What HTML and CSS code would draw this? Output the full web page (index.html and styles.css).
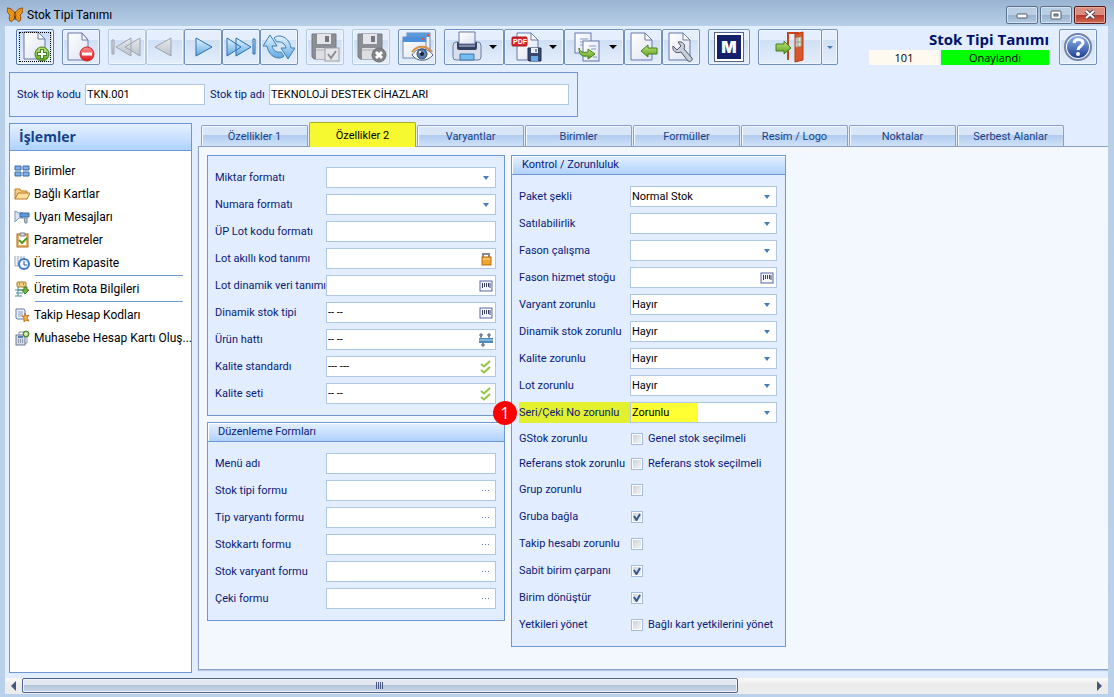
FILE: index.html
```html
<!DOCTYPE html>
<html lang="tr">

<head>
    <meta charset="UTF-8">
    <meta name="viewport" content="width=device-width, initial-scale=1.0">
    <title>Stok Tipi Tanımı</title>
    <link rel="stylesheet" href="styles.css">
</head>

<body>
    <!-- shared icon shapes -->
    <svg class="defs" width="0" height="0" aria-hidden="true">
        <defs>
            <linearGradient id="gBlue" x1="0" y1="0" x2="0" y2="1">
                <stop offset="0" stop-color="#e4f5ff"/>
                <stop offset="1" stop-color="#62a8e2"/>
            </linearGradient>
            <linearGradient id="gGray" x1="0" y1="0" x2="0" y2="1">
                <stop offset="0" stop-color="#e6e9ee"/>
                <stop offset="1" stop-color="#bcc2cb"/>
            </linearGradient>
            <linearGradient id="gGreen" x1="0" y1="0" x2="0" y2="1">
                <stop offset="0" stop-color="#c3e67e"/>
                <stop offset="1" stop-color="#5a9f1e"/>
            </linearGradient>
            <linearGradient id="gRed" x1="0" y1="0" x2="0" y2="1">
                <stop offset="0" stop-color="#ff8f8f"/>
                <stop offset="1" stop-color="#e0151b"/>
            </linearGradient>
            <linearGradient id="gPaper" x1="0" y1="0" x2="1" y2="1">
                <stop offset="0" stop-color="#ffffff"/>
                <stop offset="1" stop-color="#dde3f2"/>
            </linearGradient>
            <linearGradient id="gHelp" x1="0" y1="0" x2="0" y2="1">
                <stop offset="0" stop-color="#8fb4e6"/>
                <stop offset="1" stop-color="#1c3f96"/>
            </linearGradient>
            <symbol id="barcode" viewBox="0 0 14 12">
                <rect x="1" y="1" width="12" height="10" fill="#f4f6fc" stroke="#5868a4"/>
                <path d="M3.500 3v5M5.500 3v4M7.500 3v4M9.500 3v4M11 3v5" stroke="#39405f"/>
            </symbol>
            <symbol id="checks" viewBox="0 0 12 14">
                <path d="M1 4l3 2.500 6-5.500M1 10l3 2.500 6-5.500" fill="none" stroke="#93c544" stroke-width="2"/>
            </symbol>
            <symbol id="floppy" viewBox="0 0 26 27">
                <path d="M1 1h24v25H3l-2-2z" fill="#8b8f95" stroke="#777b81"/>
                <rect x="6" y="1" width="14" height="10" fill="#e3e5e8"/>
                <rect x="14" y="3" width="4" height="6" fill="#74787e"/>
                <rect x="5" y="15" width="16" height="11" fill="#dcdee2"/>
                <path d="M5 17h16" stroke="#abafb5"/>
            </symbol>
        </defs>
    </svg>

    <div class="window">
        <header class="titlebar">
            <svg class="app-icon" width="16" height="16" viewBox="0 0 16 16">
                <path d="M8 6C6 3 4 1 0 1c0 3 1 6 3 7-1 2-1 4 0 6 3 1 4-2 5-5 1 3 2 6 5 5 1-2 1-4 0-6 2-1 3-4 3-7-4 0-6 2-8 5z" fill="#f09a1c" stroke="#8a4b0c"/>
                <path d="M2 3l5 5-3 4M14 3L9 8l3 4" fill="none" stroke="#d9790c"/>
                <path d="M8 5v8" stroke="#4b2a0a"/>
            </svg>
            <span class="window-title">Stok Tipi Tanımı</span>
            <div class="window-buttons">
                <button type="button" aria-label="Küçült">
                    <svg width="14" height="12" viewBox="0 0 14 12"><rect x="2" y="5" width="10" height="4" rx="1" fill="#fff" stroke="#50596a"/></svg>
                </button>
                <button type="button" aria-label="Geri yükle">
                    <svg width="14" height="12" viewBox="0 0 14 12"><rect x="2" y="2" width="10" height="8" rx="1" fill="#fff" stroke="#50596a"/><rect x="5" y="5" width="4" height="2" fill="#9db6d2" stroke="#50596a"/></svg>
                </button>
                <button type="button" class="close" aria-label="Kapat">
                    <svg width="14" height="12" viewBox="0 0 14 12"><path d="M3 2l8 7M11 2L3 9" stroke="#49475a" stroke-width="4"/><path d="M3 2l8 7M11 2L3 9" stroke="#fff" stroke-width="2"/></svg>
                </button>
            </div>
        </header>

        <main class="client">
            <div class="toolbar">
                <div class="tool-group">
                    <button type="button" class="tool focused" aria-label="Yeni">
                        <svg width="32" height="32" viewBox="0 0 32 32">
                            <path d="M5 1h14l7 7v20H5z" fill="url(#gPaper)" stroke="#6878a8"/>
                            <path d="M19 1v7h7z" fill="#fff" stroke="#6878a8"/>
                            <circle cx="23" cy="23" r="7" fill="url(#gGreen)" stroke="#43801a"/>
                            <path d="M23 18v10M18 23h10" stroke="#4a861f" stroke-width="4"/>
                            <path d="M23 19v8M19 23h8" stroke="#fff" stroke-width="2"/>
                        </svg>
                    </button>
                </div>
                <div class="tool-group">
                    <button type="button" class="tool" aria-label="Sil">
                        <svg width="32" height="32" viewBox="0 0 32 32">
                            <path d="M3 2h14l6 7v20H3z" fill="url(#gPaper)" stroke="#6878a8"/>
                            <path d="M17 2v7h6z" fill="#fff" stroke="#6878a8"/>
                            <circle cx="22" cy="23" r="7" fill="url(#gRed)" stroke="#cf2329"/>
                            <path d="M17 23h10" stroke="#fff" stroke-width="3"/>
                        </svg>
                    </button>
                </div>
                <div class="tool-group">
                    <button type="button" class="tool" disabled aria-label="İlk kayıt">
                        <svg width="32" height="32" viewBox="0 0 32 32" fill="url(#gGray)" stroke="#9da4af">
                            <path d="M1 9h2v14H1zM20 7v18L5 16zM29 7v18l-15-9z"/>
                        </svg>
                    </button>
                    <button type="button" class="tool" disabled aria-label="Önceki kayıt">
                        <svg width="32" height="32" viewBox="0 0 32 32"><path d="M22 7v18L6 16z" fill="url(#gGray)" stroke="#9da4af"/></svg>
                    </button>
                    <button type="button" class="tool" aria-label="Sonraki kayıt">
                        <svg width="32" height="32" viewBox="0 0 32 32"><path d="M9 7v18l16-9z" fill="url(#gBlue)" stroke="#2c6fae"/></svg>
                    </button>
                    <button type="button" class="tool" aria-label="Son kayıt">
                        <svg width="32" height="32" viewBox="0 0 32 32" fill="url(#gBlue)" stroke="#2c6fae">
                            <path d="M2 7v18l14-9zM11 7v18l15-9zM28 8h2v15h-2z"/>
                        </svg>
                    </button>
                    <button type="button" class="tool" aria-label="Yenile">
                        <svg width="32" height="32" viewBox="0 0 32 32" fill="url(#gBlue)" stroke="#3a7fb4">
                            <path d="M7 4L0 15h4c1 7 6 12 12 12 2 0 4-1 5-2l-3-4c-5 1-8-2-9-6h5z"/>
                            <path d="M25 28l7-11h-4c-1-7-6-12-12-12-2 0-4 1-5 2l3 4c5-1 8 2 9 6h-5z"/>
                        </svg>
                    </button>
                </div>
                <div class="tool-group">
                    <button type="button" class="tool" disabled aria-label="Kaydet">
                        <svg width="32" height="32" viewBox="0 0 32 32">
                            <use href="#floppy" x="2" y="2" width="26" height="27"/>
                            <rect x="16" y="17" width="14" height="13" fill="#e4e6e9" stroke="#9a9ea4"/>
                            <path d="M19 23l3 4 5-7" fill="none" stroke="#8b8f95" stroke-width="2"/>
                        </svg>
                    </button>
                </div>
                <div class="tool-group">
                    <button type="button" class="tool" disabled aria-label="Kaydı iptal et">
                        <svg width="32" height="32" viewBox="0 0 32 32">
                            <use href="#floppy" x="2" y="2" width="26" height="27"/>
                            <circle cx="24" cy="24" r="7" fill="#808489" stroke="#6d7176"/>
                            <path d="M21 21l6 6M27 21l-6 6" stroke="#fff" stroke-width="3"/>
                        </svg>
                    </button>
                </div>
                <div class="tool-group">
                    <button type="button" class="tool" aria-label="Önizleme">
                        <svg width="32" height="32" viewBox="0 0 32 32">
                            <rect x="6" y="2" width="23" height="18" fill="#eef4fc" stroke="#6c88b8"/>
                            <path d="M6 2h23v4H6z" fill="#5a9bdc"/>
                            <rect x="2" y="6" width="23" height="21" fill="url(#gPaper)" stroke="#6c88b8"/>
                            <path d="M2 6h23v5H2z" fill="#4a90dc"/>
                            <path d="M21 8h2M26 4h2" stroke="#ff4b35" stroke-width="2"/>
                            <path d="M11 24c5-8 15-8 21 0-6 7-16 7-21 0z" fill="#fff" stroke="#50617e"/>
                            <path d="M11 21c5-7 15-7 20 0" fill="none" stroke="#d98f47" stroke-width="2"/>
                            <circle cx="21" cy="23" r="5" fill="#5f83ad" stroke="#2f4768"/>
                            <circle cx="21" cy="23" r="2" fill="#14233a"/>
                            <circle cx="19" cy="21" r="1" fill="#fff"/>
                        </svg>
                    </button>
                </div>
                <div class="tool-group">
                    <button type="button" class="tool wide" aria-label="Yazdır">
                        <svg width="32" height="32" viewBox="0 0 32 32">
                            <path d="M2 15q0-4 3-4h22q3 0 3 4v11q0 3-3 3H5q-3 0-3-3z" fill="#d8deec" stroke="#6c7aa0"/>
                            <path d="M6 11h20v6q0 2-2 2H8q-2 0-2-2z" fill="#34405f"/>
                            <path d="M8 1h16v12H8z" fill="url(#gPaper)" stroke="#6878a8"/>
                            <path d="M8 15h16" stroke="#7d8aaa" stroke-width="2"/>
                            <path d="M9 23h14v6H9z" fill="#75bdec" stroke="#3d78ad"/>
                        </svg>
                        <span class="caret"></span>
                    </button>
                    <button type="button" class="tool wide" aria-label="PDF olarak kaydet">
                        <svg width="32" height="32" viewBox="0 0 32 32">
                            <path d="M6 2h14l7 7v20H6z" fill="url(#gPaper)" stroke="#6878a8"/>
                            <path d="M20 2v7h7z" fill="#fff" stroke="#6878a8"/>
                            <rect x="1" y="6" width="15" height="9" rx="1" fill="#d9252b" stroke="#a91b20"/>
                            <text x="2" y="13" class="pdf-text">PDF</text>
                            <path d="M17 17h13v13H18l-1-1z" fill="#36486e" stroke="#20304f"/>
                            <path d="M20 17h7v5h-7z" fill="#e9edf6"/>
                            <path d="M20 25h7v5h-7z" fill="#68aae6"/>
                            <path d="M25 18v3" stroke="#20304f"/>
                        </svg>
                        <span class="caret"></span>
                    </button>
                    <button type="button" class="tool wide" aria-label="Kopyala">
                        <svg width="32" height="32" viewBox="0 0 32 32">
                            <rect x="4" y="2" width="16" height="20" fill="url(#gPaper)" stroke="#6878a8"/>
                            <path d="M9 8h8M9 11h6M9 14h4" stroke="#8a99c4"/>
                            <rect x="12" y="10" width="16" height="20" fill="url(#gPaper)" stroke="#6878a8"/>
                            <path d="M18 15h7M20 18h5M22 26h4" stroke="#8a99c4"/>
                            <path d="M8 17c1 4 4 5 9 4v-3l7 5-7 5v-3c-6 1-9-1-9-8z" fill="url(#gGreen)" stroke="#43801a"/>
                        </svg>
                        <span class="caret"></span>
                    </button>
                    <button type="button" class="tool" aria-label="İçeri al">
                        <svg width="32" height="32" viewBox="0 0 32 32">
                            <path d="M4 2h14l7 7v20H4z" fill="url(#gPaper)" stroke="#6878a8"/>
                            <path d="M18 2v7h7z" fill="#fff" stroke="#6878a8"/>
                            <path d="M14 20l7-6v3h9v6h-9v3z" fill="url(#gGreen)" stroke="#43801a"/>
                        </svg>
                    </button>
                    <button type="button" class="tool" aria-label="Ayarlar">
                        <svg width="32" height="32" viewBox="0 0 32 32">
                            <path d="M4 2h14l7 7v20H4z" fill="url(#gPaper)" stroke="#6878a8"/>
                            <path d="M18 2v7h7z" fill="#fff" stroke="#6878a8"/>
                            <path d="M13 11c5-1 8 3 6 7l8 9c1 3-2 4-4 3l-7-9c-5 2-9-1-8-6l4 4 4-4z" fill="#c8ced9" stroke="#4b566c"/>
                        </svg>
                    </button>
                </div>
                <div class="tool-group">
                    <button type="button" class="tool logo" aria-label="M"><span>M</span></button>
                </div>
                <div class="tool-group">
                    <button type="button" class="tool exit" aria-label="Çıkış">
                        <svg width="32" height="32" viewBox="0 0 32 32">
                            <path d="M14 29V2h11" fill="none" stroke="#c6451d" stroke-width="2"/>
                            <path d="M21 3l8-2v28l-8 2z" fill="#d9562a" stroke="#b53c17"/>
                            <path d="M22 7l5-1v9l-5 1z" fill="#e6ead0" stroke="#a8b0a0"/>
                            <path d="M24 7v9M22 11h5" stroke="#8b9a8b"/>
                            <path d="M2 13h8v-3l7 7-7 6v-3H2z" fill="url(#gGreen)" stroke="#43801a"/>
                        </svg>
                    </button>
                    <button type="button" class="tool exit-menu" aria-label="Çıkış seçenekleri"><span class="caret small"></span></button>
                </div>

                <div class="doc-status">
                    <h1>Stok Tipi Tanımı</h1>
                    <div class="status-row">
                        <span class="doc-no">101</span>
                        <span class="doc-state">Onaylandı</span>
                    </div>
                </div>
                <button type="button" class="tool" aria-label="Yardım">
                    <svg width="32" height="32" viewBox="0 0 32 32">
                        <circle cx="16" cy="16" r="13" fill="#fff" stroke="#7383ac" stroke-width="2"/>
                        <circle cx="16" cy="16" r="11" fill="url(#gHelp)"/>
                        <path d="M12 12c1-5 9-4 9 0 0 3-5 3-5 7" fill="none" stroke="#fff" stroke-width="3"/>
                        <circle cx="16" cy="23" r="2" fill="#fff"/>
                    </svg>
                </button>
            </div>

            <div class="key-panel">
                <label for="kod">Stok tip kodu</label>
                <input type="text" id="kod" class="code" value="TKN.001">
                <label for="ad">Stok tip adı</label>
                <input type="text" id="ad" class="name" value="TEKNOLOJİ DESTEK CİHAZLARI">
            </div>

            <div class="work">
                <aside class="sidebar">
                    <h2>İşlemler</h2>
                    <nav>
                        <a href="#">
                            <svg width="16" height="16" viewBox="0 0 16 16" fill="#7db0e8" stroke="#3c68a0"><path d="M1 3h6v4H1zM9 3h6v4H9zM1 9h6v4H1zM9 9h6v4H9z"/></svg>
                            <span>Birimler</span>
                        </a>
                        <a href="#">
                            <svg width="16" height="16" viewBox="0 0 16 16" stroke="#b97a22"><path d="M1 13V3h5l1 2h6v3" fill="#f6cf85"/><path d="M1 13l3-6h12l-3 6z" fill="#ffe0a0"/></svg>
                            <span>Bağlı Kartlar</span>
                        </a>
                        <a href="#">
                            <svg width="16" height="16" viewBox="0 0 16 16"><path d="M1 2v11l4-4h4V4H5z" fill="#d8e4f4" stroke="#8296b5"/><path d="M6 4h9v4H6z" fill="#609bd6" stroke="#3f6da5"/><path d="M10 9h3v5h-2z" fill="#c6cdd8" stroke="#77849a"/></svg>
                            <span>Uyarı Mesajları</span>
                        </a>
                        <a href="#">
                            <svg width="16" height="16" viewBox="0 0 16 16"><rect x="3" y="2" width="11" height="13" fill="#edb363" stroke="#ac6e22"/><path d="M5 4h7v9H5z" fill="#fff"/><path d="M6 1h5v3H6z" fill="#d8dbe0" stroke="#7d7d80"/><path d="M5 8l3 3 5-5" fill="none" stroke="#4c9d20" stroke-width="2"/></svg>
                            <span>Parametreler</span>
                        </a>
                        <a href="#">
                            <svg width="16" height="16" viewBox="0 0 16 16"><path d="M1 1v10h9V1M4 1v10M7 1v5" fill="#eef3fa" stroke="#9aabc8"/><circle cx="10" cy="9" r="5" fill="#eaf3ff" stroke="#4379bd" stroke-width="2"/><path d="M10 6v4h3" fill="none" stroke="#34588c"/></svg>
                            <span>Üretim Kapasite</span>
                        </a>
                        <hr>
                        <a href="#">
                            <svg width="16" height="16" viewBox="0 0 16 16"><rect x="3" y="1" width="9" height="5" rx="1" fill="#f2cf87" stroke="#a87b2f"/><path d="M5 3h1M9 3h1" stroke="#68481c"/><path d="M4 6v3h8M1 9h7M1 15h7M4 9v6M2 12h7" fill="none" stroke="#468e9b"/><path d="M10 6h3v3h2l-4 4-3-4h2z" fill="#77b637" stroke="#427c20"/></svg>
                            <span>Üretim Rota Bilgileri</span>
                        </a>
                        <hr>
                        <a href="#">
                            <svg width="16" height="16" viewBox="0 0 16 16"><path d="M2 2h8l1 1v9H3l-1-1z" fill="#eef2fc" stroke="#6878a8"/><path d="M4 5h5M4 7h5M4 9h4" stroke="#8a99c4"/><path d="M11 6l1 3 3-1-2 3 2 3-3-1-2 2V11L8 9h3z" fill="#f7b73a" stroke="#c87320"/></svg>
                            <span>Takip Hesap Kodları</span>
                        </a>
                        <a href="#">
                            <svg width="16" height="16" viewBox="0 0 16 16"><path d="M5 2h8v11H5z" fill="#fff" stroke="#8995b0"/><rect x="2" y="5" width="9" height="10" fill="#d5dce9" stroke="#6d7b98"/><path d="M4 7h5" stroke="#5a82b0" stroke-width="2"/><path d="M4 10h1M6 10h1M8 10h1M4 12h1M6 12h1M8 12h1" stroke="#4b5670"/><circle cx="12" cy="4" r="3" fill="#7fbd3f" stroke="#48822a"/><path d="M12 2v4M10 4h4" stroke="#fff"/></svg>
                            <span>Muhasebe Hesap Kartı Oluş...</span>
                        </a>
                    </nav>
                </aside>

                <section class="tab-area">
                    <div class="tabs" role="tablist">
                        <button type="button" role="tab">Özellikler 1</button>
                        <button type="button" role="tab" class="active" aria-selected="true">Özellikler 2</button>
                        <button type="button" role="tab">Varyantlar</button>
                        <button type="button" role="tab">Birimler</button>
                        <button type="button" role="tab">Formüller</button>
                        <button type="button" role="tab">Resim / Logo</button>
                        <button type="button" role="tab">Noktalar</button>
                        <button type="button" role="tab">Serbest Alanlar</button>
                    </div>

                    <form class="tab-page">
                        <div class="column left">
                            <div class="panel">
                                <div class="rows">
                                    <div class="row"><label for="miktar">Miktar formatı</label><select id="miktar"><option></option></select></div>
                                    <div class="row"><label for="numara">Numara formatı</label><select id="numara"><option></option></select></div>
                                    <div class="row"><label for="upLot">ÜP Lot kodu formatı</label><input type="text" id="upLot"></div>
                                    <div class="row"><label for="lotKod">Lot akıllı kod tanımı</label>
                                        <div class="field"><input type="text" id="lotKod">
                                            <button type="button" aria-label="Kilit"><svg width="12" height="14" viewBox="0 0 12 14"><path d="M3 6V2h6v4" fill="none" stroke="#85898f" stroke-width="2"/><rect x="2" y="5" width="9" height="8" fill="#efa530" stroke="#b86d13"/><path d="M3 7h7" stroke="#ffe1a1"/></svg></button>
                                        </div>
                                    </div>
                                    <div class="row"><label for="lotVeri">Lot dinamik veri tanımı</label>
                                        <div class="field"><input type="text" id="lotVeri">
                                            <button type="button" aria-label="Seç"><svg width="14" height="12"><use href="#barcode"/></svg></button>
                                        </div>
                                    </div>
                                    <div class="row"><label for="dinamik">Dinamik stok tipi</label>
                                        <div class="field"><input type="text" id="dinamik" value="-- --">
                                            <button type="button" aria-label="Seç"><svg width="14" height="12"><use href="#barcode"/></svg></button>
                                        </div>
                                    </div>
                                    <div class="row"><label for="hat">Ürün hattı</label>
                                        <div class="field"><input type="text" id="hat" value="-- --">
                                            <button type="button" aria-label="Seç"><svg width="14" height="14" viewBox="0 0 14 14"><path d="M2 3v3M10 3v3M4 9v3" stroke="#4a5a7a"/><path d="M1 1h2v2H1zM9 1h2v2H9zM3 11h2v2H3z" fill="#fff" stroke="#4a5a7a"/><rect x="0" y="5" width="14" height="5" fill="#4c8bbb"/><path d="M0 7h14" stroke="#bfe3f8"/></svg></button>
                                        </div>
                                    </div>
                                    <div class="row"><label for="standart">Kalite standardı</label>
                                        <div class="field"><input type="text" id="standart" value="--- ---">
                                            <button type="button" aria-label="Seç"><svg width="12" height="14"><use href="#checks"/></svg></button>
                                        </div>
                                    </div>
                                    <div class="row"><label for="set">Kalite seti</label>
                                        <div class="field"><input type="text" id="set" value="-- --">
                                            <button type="button" aria-label="Seç"><svg width="12" height="14"><use href="#checks"/></svg></button>
                                        </div>
                                    </div>
                                </div>
                            </div>

                            <div class="panel">
                                <h3>Düzenleme Formları</h3>
                                <div class="rows">
                                    <div class="row"><label for="menu">Menü adı</label><input type="text" id="menu"></div>
                                    <div class="row"><label for="f1">Stok tipi formu</label><div class="field"><input type="text" id="f1"><button type="button" class="dots" aria-label="Seç"></button></div></div>
                                    <div class="row"><label for="f2">Tip varyantı formu</label><div class="field"><input type="text" id="f2"><button type="button" class="dots" aria-label="Seç"></button></div></div>
                                    <div class="row"><label for="f3">Stokkartı formu</label><div class="field"><input type="text" id="f3"><button type="button" class="dots" aria-label="Seç"></button></div></div>
                                    <div class="row"><label for="f4">Stok varyant formu</label><div class="field"><input type="text" id="f4"><button type="button" class="dots" aria-label="Seç"></button></div></div>
                                    <div class="row"><label for="f5">Çeki formu</label><div class="field"><input type="text" id="f5"><button type="button" class="dots" aria-label="Seç"></button></div></div>
                                </div>
                            </div>
                        </div>

                        <div class="column right">
                            <div class="panel">
                                <h3>Kontrol / Zorunluluk</h3>
                                <div class="rows">
                                    <div class="row"><label for="paket">Paket şekli</label><select id="paket"><option>Normal Stok</option></select></div>
                                    <div class="row"><label for="satilabilir">Satılabilirlik</label><select id="satilabilir"><option></option></select></div>
                                    <div class="row"><label for="fason">Fason çalışma</label><select id="fason"><option></option></select></div>
                                    <div class="row"><label for="hizmet">Fason hizmet stoğu</label>
                                        <div class="field"><input type="text" id="hizmet">
                                            <button type="button" aria-label="Seç"><svg width="14" height="12"><use href="#barcode"/></svg></button>
                                        </div>
                                    </div>
                                    <div class="row"><label for="varyant">Varyant zorunlu</label><select id="varyant"><option>Hayır</option></select></div>
                                    <div class="row"><label for="dstok">Dinamik stok zorunlu</label><select id="dstok"><option>Hayır</option></select></div>
                                    <div class="row"><label for="kalite">Kalite zorunlu</label><select id="kalite"><option>Hayır</option></select></div>
                                    <div class="row"><label for="lot">Lot zorunlu</label><select id="lot"><option>Hayır</option></select></div>
                                    <div class="row marked"><span class="step">1</span><label for="seri">Seri/Çeki No zorunlu</label><select id="seri"><option>Zorunlu</option></select></div>
                                    <div class="row tight"><label for="gstok">GStok zorunlu</label><input type="checkbox" id="gstok"><label for="gstok" class="note">Genel stok seçilmeli</label></div>
                                    <div class="row tight"><label for="referans">Referans stok zorunlu</label><input type="checkbox" id="referans"><label for="referans" class="note">Referans stok seçilmeli</label></div>
                                    <div class="row"><label for="grup">Grup zorunlu</label><input type="checkbox" id="grup"></div>
                                    <div class="row"><label for="gruba">Gruba bağla</label><input type="checkbox" id="gruba" checked></div>
                                    <div class="row"><label for="takip">Takip hesabı zorunlu</label><input type="checkbox" id="takip"></div>
                                    <div class="row"><label for="sabit">Sabit birim çarpanı</label><input type="checkbox" id="sabit" checked></div>
                                    <div class="row"><label for="birim">Birim dönüştür</label><input type="checkbox" id="birim" checked></div>
                                    <div class="row"><label for="yetki">Yetkileri yönet</label><input type="checkbox" id="yetki"><label for="yetki" class="note">Bağlı kart yetkilerini yönet</label></div>
                                </div>
                            </div>
                        </div>
                    </form>
                </section>
            </div>

            <div class="scrollbar">
                <button type="button" aria-label="Sola kaydır"><svg width="5" height="10" viewBox="0 0 5 10"><path d="M5 0v10L0 5z" fill="#46557f"/></svg></button>
                <div class="track"><div class="thumb"><span class="grip"></span></div></div>
                <button type="button" aria-label="Sağa kaydır"><svg width="5" height="10" viewBox="0 0 5 10"><path d="M0 0v10l5-5z" fill="#46557f"/></svg></button>
            </div>
        </main>
    </div>
</body>

</html>
```

FILE: styles.css
```css
* {
    box-sizing: border-box;
}

body {
    margin: 0;
    font-family: Roboto, "Noto Sans", sans-serif;
    font-size: 11px;
    color: #0a1a78;
}

.defs {
    position: absolute;
}

svg {
    flex-shrink: 0;
}

button,
input,
select {
    font-family: inherit;
    font-size: inherit;
    margin: 0;
    padding: 0;
}

button {
    border: none;
    background: none;
    display: flex;
    align-items: center;
    justify-content: center;
}

.window {
    display: flex;
    flex-direction: column;
    min-height: 100vh;
    padding: 0 6px 3px 5px;
    background: linear-gradient(#99b4d1, #b8cfe8 26px, #b9d1ea);
}

/* title bar */
.titlebar {
    display: flex;
    align-items: center;
    height: 26px;
    padding: 3px 0 0 2px;
    gap: 4px;
}

.window-title {
    font-size: 12px;
    color: #000;
}

.window-buttons {
    display: flex;
    gap: 2px;
    margin: 0 2px 0 auto;
}

.window-buttons button {
    width: 32px;
    height: 18px;
    border: 1px solid #5c7390;
    border-radius: 2px;
    box-shadow: inset 0 0 0 1px #d3e1f0;
    background: linear-gradient(#b9cde3 50%, #98b1cd 50%, #b4cae2);
}

.window-buttons .close {
    border-color: #551c1c;
    box-shadow: inset 0 0 0 1px #e6a69a;
    background: linear-gradient(#d98d7e 50%, #b8372a 50%, #cd6a50);
}

.client {
    flex: 1;
    display: flex;
    flex-direction: column;
    background: #e2eeff;
}

/* toolbar */
.toolbar {
    display: flex;
    gap: 8px;
    padding: 3px 11px 7px;
}

.tool-group {
    display: flex;
}

.tool {
    width: 38px;
    height: 36px;
    border: 1px solid #7291bd;
    border-radius: 2px;
    box-shadow: inset 0 0 0 1px #f0f6ff;
    background: linear-gradient(#e4eefc 28%, #cfdff3 28%, #e3eefc);
}

.tool:disabled {
    border-color: #b4c8e2;
}

.tool.focused {
    background: linear-gradient(#c5daf6, #e6f0fd);
    border-color: #5577aa;
    outline: 1px dotted #000;
    outline-offset: -4px;
}

.tool.wide {
    width: 60px;
    gap: 6px;
}

.caret {
    border: 4px solid transparent;
    border-top-color: #000;
    border-bottom: none;
}

.caret.small {
    border-width: 3px;
    border-bottom: none;
    border-top-color: #4a7ab8;
}

.pdf-text {
    font-family: "Liberation Sans", sans-serif;
    font-size: 7px;
    font-weight: bold;
    fill: #fff;
}

.tool.logo {
    width: 42px;
}

.tool.logo span {
    width: 30px;
    height: 30px;
    border: 1px solid #56658e;
    box-shadow: inset 0 0 0 2px #fff;
    background: #15206b;
    color: #fff;
    font-family: Inter, sans-serif;
    font-size: 16px;
    font-weight: 900;
    line-height: 28px;
}

.tool.exit {
    width: 64px;
}

.tool.exit-menu {
    width: 17px;
    margin-left: -1px;
}

.doc-status {
    width: 180px;
    margin: 0 2px 0 auto;
}

.doc-status h1 {
    margin: 0;
    font-family: "Open Sans", "Noto Sans", sans-serif;
    font-size: 15px;
    line-height: 21px;
    text-align: right;
    white-space: nowrap;
    color: #00106e;
}

.status-row {
    display: flex;
    gap: 2px;
    line-height: 15px;
    font-family: "Open Sans", "Noto Sans", sans-serif;
    text-align: center;
    color: #000;
}

.doc-no {
    width: 70px;
    background: #fffaf0;
}

.doc-state {
    flex: 1;
    background: #0f0;
}

/* fields */
input[type="text"],
select,
.field {
    height: 21px;
    border: 1px solid #afc6e4;
    border-radius: 0;
    background: #fff;
    color: #000;
    padding: 0 1px;
}

select {
    appearance: none;
    background: #fff url("data:image/svg+xml,%3Csvg xmlns='http://www.w3.org/2000/svg' width='6' height='4'%3E%3Cpath d='M0 0h6L3 4z' fill='%23487bb5'/%3E%3C/svg%3E") no-repeat right 6px center;
}

.key-panel {
    display: flex;
    align-items: center;
    width: 569px;
    height: 45px;
    margin-left: 4px;
    padding: 0 8px 0 7px;
    border: 1px solid #6d98d3;
}

.key-panel label {
    width: 68px;
    white-space: nowrap;
}

.key-panel .code {
    width: 120px;
}

.key-panel .name {
    flex: 1;
}

.key-panel .code + label {
    width: 64px;
    padding-left: 5px;
}

.work {
    flex: 1;
    display: flex;
    gap: 6px;
    margin: 5px 0 5px 4px;
}

/* sidebar */
.sidebar {
    width: 183px;
    margin-top: 1px;
    border: 1px solid #6d98d3;
    background: #fff;
    font-size: 12px;
}

.sidebar h2 {
    margin: 0;
    padding-left: 9px;
    border-bottom: 1px solid #6d98d3;
    background: linear-gradient(#e6f1ff, #b0d2ff);
    font-family: "Open Sans", "Noto Sans", sans-serif;
    font-size: 14px;
    line-height: 26px;
    color: #15428b;
}

.sidebar nav {
    padding: 8px 0 0 4px;
}

.sidebar a {
    display: flex;
    align-items: center;
    gap: 4px;
    height: 23px;
    color: #000;
    text-decoration: none;
    white-space: nowrap;
}

.sidebar hr {
    height: 1px;
    margin: 1px 8px 1px 21px;
    border: none;
    background: #6d98d3;
}

/* tabs */
.tab-area {
    flex: 1;
    display: flex;
    flex-direction: column;
    margin-bottom: 3px;
}

.tabs {
    display: flex;
    align-items: flex-end;
    gap: 1px;
    padding-left: 3px;
}

.tabs button {
    width: 107px;
    height: 21px;
    border: 1px solid #8ba0c8;
    border-bottom: none;
    border-radius: 2px 2px 0 0;
    box-shadow: inset 1px 1px 0 #f2f7ff;
    background: linear-gradient(#d9e6f8 45%, #b1cbee 45%, #cfe1f8);
    color: #15428b;
}

.tabs .active {
    height: 25px;
    margin-bottom: -1px;
    position: relative;
    border: 1px solid #a9ac2a;
    border-bottom: none;
    box-shadow: none;
    background: #f7f930;
    color: #000;
}

.tab-page {
    flex: 1;
    display: flex;
    align-items: flex-start;
    gap: 6px;
    padding: 8px;
    border: 1px solid #8ba0c8;
    border-right: none;
    box-shadow: 0 1px 1px #b5c8e2;
    background: #f3f8ff;
}

.column {
    display: flex;
    flex-direction: column;
    gap: 6px;
}

.left {
    width: 298px;
}

.right {
    width: 275px;
}

.panel {
    border: 1px solid #6d98d3;
    background: #e2eeff;
}

.panel h3 {
    margin: 0;
    padding-left: 10px;
    border-bottom: 1px solid #6d98d3;
    box-shadow: inset 1px 1px 0 #fff;
    background: linear-gradient(#e4f0ff, #b0d2ff);
    font-size: 11px;
    font-weight: normal;
    line-height: 18px;
}

.rows {
    padding: 8px 8px 8px 7px;
}

.row {
    display: flex;
    align-items: center;
    position: relative;
    height: 27px;
}

.row.tight {
    height: 25px;
}

.row > label {
    flex-shrink: 0;
    width: 111px;
    white-space: nowrap;
}

.row > label.note {
    width: auto;
    margin-left: 5px;
}

.row > select,
.row > input[type="text"],
.field {
    flex: 1;
    min-width: 0;
}

.field {
    display: flex;
    align-items: center;
    padding: 0;
}

.field input[type="text"] {
    flex: 1;
    min-width: 0;
    height: 19px;
    border: none;
}

.field button {
    width: 18px;
    height: 19px;
}

.field .dots::before {
    content: "";
    width: 8px;
    height: 1px;
    background: repeating-linear-gradient(90deg, #487bb5 0 1px, transparent 1px 3px);
}

.row input[type="checkbox"] {
    appearance: none;
    flex-shrink: 0;
    width: 12px;
    height: 12px;
    margin-left: 1px;
    border: 1px solid #a3bce0;
    box-shadow: inset 0 0 0 1px #fff;
    background: linear-gradient(135deg, #c9cfd8, #f6f7f9);
}

.row input[type="checkbox"]:checked {
    background: url("data:image/svg+xml,%3Csvg xmlns='http://www.w3.org/2000/svg' width='10' height='10'%3E%3Cpath d='M2 4l2.500 4L8 2' fill='none' stroke='%2335598c' stroke-width='2'/%3E%3C/svg%3E") center no-repeat, linear-gradient(135deg, #c9cfd8, #f6f7f9);
}

/* highlighted row */
.marked > label {
    line-height: 21px;
    background: #e3f02f;
}

.marked select {
    background-image: url("data:image/svg+xml,%3Csvg xmlns='http://www.w3.org/2000/svg' width='6' height='4'%3E%3Cpath d='M0 0h6L3 4z' fill='%23487bb5'/%3E%3C/svg%3E"), linear-gradient(#ff3, #ff3);
    background-position: right 6px center, left top;
    background-repeat: no-repeat;
    background-size: auto, 67px 100%;
}

.step {
    position: absolute;
    left: -26px;
    width: 24px;
    border-radius: 50%;
    background: #f00;
    color: #fff;
    font-family: "Open Sans", "Noto Sans", sans-serif;
    font-size: 16px;
    line-height: 24px;
    text-align: center;
}

/* scrollbar */
.scrollbar {
    display: flex;
    height: 16px;
    background: linear-gradient(#fafafa, #ececec 40%);
}

.scrollbar button {
    width: 17px;
}

.track {
    flex: 1;
}

.thumb {
    display: flex;
    align-items: center;
    justify-content: center;
    width: 67%;
    height: 15px;
    border: 1px solid #53658f;
    border-radius: 2px;
    box-shadow: inset 0 0 0 1px #eef2fa;
    background: linear-gradient(#e2e6ee 50%, #b5c5da 50%, #ccd8e8);
}

.grip {
    width: 8px;
    height: 7px;
    background: repeating-linear-gradient(90deg, #46557f 0 1px, transparent 1px 2px);
}
```
